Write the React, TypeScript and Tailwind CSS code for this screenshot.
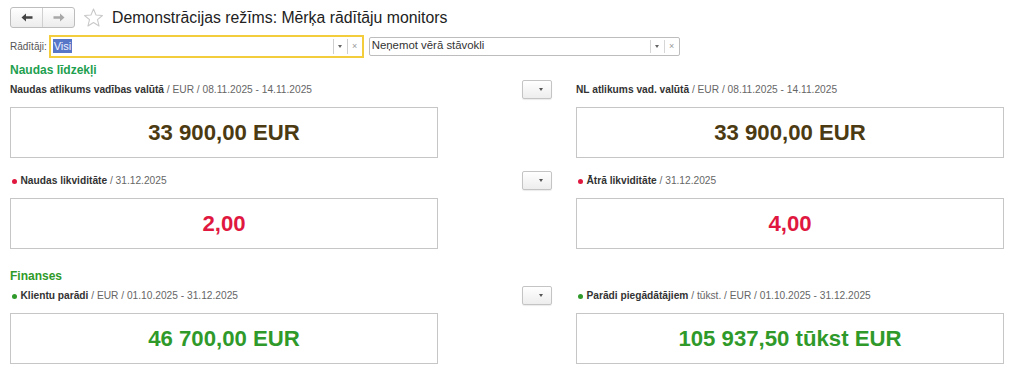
import React from "react";

type Tone = "brown" | "red" | "green";

const valueColor: Record<Tone, string> = {
  brown: "text-[#4b3a12]",
  red: "text-[#e0183f]",
  green: "text-[#2f9a2a]",
};

function DropButton() {
  return (
    <button
      type="button"
      className="flex h-[19px] w-[30px] items-center justify-end rounded-[2px] border border-[#c4c4c4] bg-gradient-to-b from-white to-[#ededed] pr-[8px] shadow-[0_1px_1px_rgba(0,0,0,0.08)]"
    >
      <span className="h-0 w-0 border-x-[2.5px] border-t-[3px] border-x-transparent border-t-[#555]" />
    </button>
  );
}

function Indicator({
  title,
  meta,
  value,
  tone,
  dot,
}: {
  title: string;
  meta: string;
  value: string;
  tone: Tone;
  dot?: "red" | "green";
}) {
  return (
    <div className="flex flex-col">
      <div className="flex h-[19px] items-center pt-[2px] text-[10.2px] leading-none">
        {dot ? (
          <span
            className={
              dot === "red"
                ? "mr-[4px] ml-[2px] h-[4.5px] w-[4.5px] rounded-full bg-[#e0183f]"
                : "mr-[4px] ml-[2px] h-[4.5px] w-[4.5px] rounded-full bg-[#2f9a2a]"
            }
          />
        ) : null}
        <span className="font-bold text-[#333]">{title}</span>
        <span className="whitespace-pre text-[#666]">{meta}</span>
      </div>
      <div className="mt-[8px] flex h-[51px] w-[428px] items-center justify-center border border-[#c6c6c6] bg-white">
        <span className={`text-[22.2px] font-bold ${valueColor[tone]}`}>{value}</span>
      </div>
    </div>
  );
}

function Row({
  left,
  right,
}: {
  left: React.ReactNode;
  right: React.ReactNode;
}) {
  return (
    <div className="flex">
      <div className="relative w-[542px]">
        {left}
        <div className="absolute right-0 top-0">
          <DropButton />
        </div>
      </div>
      <div className="ml-[24px]">{right}</div>
    </div>
  );
}

export default function App() {
  return (
    <div className="h-[379px] w-[1024px] overflow-hidden bg-white px-[10px] font-['Liberation_Sans',Arial,sans-serif] text-[#333]">
      <div className="flex h-[34px] items-center pt-[1px]">
        <div className="flex h-[21px] overflow-hidden rounded-[3px] border border-[#bdbdbd] bg-gradient-to-b from-white to-[#ececec]">
          <div className="flex w-[32px] items-center justify-center border-r border-[#d0d0d0]">
            <svg width="12" height="9" viewBox="0 0 12 9">
              <path d="M0.5 4.5 L5 0.5 L5 3.3 L11.5 3.3 L11.5 5.7 L5 5.7 L5 8.5 Z" fill="#444" />
            </svg>
          </div>
          <div className="flex w-[31px] items-center justify-center">
            <svg width="12" height="9" viewBox="0 0 12 9">
              <path d="M11.5 4.5 L7 0.5 L7 3.3 L0.5 3.3 L0.5 5.7 L7 5.7 L7 8.5 Z" fill="#a8a8a8" />
            </svg>
          </div>
        </div>
        <svg className="ml-[8px]" width="21" height="20" viewBox="0 0 24 23">
          <path
            d="M12 1.2 L14.9 8.1 L22.3 8.6 L16.6 13.4 L18.4 20.7 L12 16.7 L5.6 20.7 L7.4 13.4 L1.7 8.6 L9.1 8.1 Z"
            fill="none"
            stroke="#c8c8c8"
            strokeWidth="1.2"
            strokeLinejoin="round"
          />
        </svg>
        <h1 className="ml-[8px] text-[15.8px] leading-none text-[#222]">
          Demonstrācijas režīms: Mērķa rādītāju monitors
        </h1>
      </div>

      <div className="flex h-[24px] items-center">
        <span className="mr-[2px] text-[10px] text-[#555]">Rādītāji:</span>
        <div className="flex h-[23px] w-[315px] items-center border-2 border-[#f3cd3c] bg-white">
          <span className="ml-[2px] bg-[#5876c8] px-[1px] text-[11px] leading-[14px] text-[#eef0ff]">Visi</span>
          <div className="flex-1" />
          <div className="flex h-[15px] w-[14px] items-center justify-center border-l border-[#cfcfcf]">
            <span className="h-0 w-0 border-x-[2.5px] border-t-[3px] border-x-transparent border-t-[#666]" />
          </div>
          <div className="flex h-[15px] w-[15px] items-center justify-center border-l border-[#cfcfcf] text-[9px] leading-none text-[#999]">
            ×
          </div>
        </div>
        <div className="ml-[5px] flex h-[19px] w-[311px] items-center rounded-[2px] border border-[#bdbdbd] bg-white">
          <span className="ml-[2px] text-[11.4px] text-[#333]">Neņemot vērā stāvokli</span>
          <div className="flex-1" />
          <div className="flex h-[13px] w-[14px] items-center justify-center border-l border-[#d6d6d6]">
            <span className="h-0 w-0 border-x-[2.5px] border-t-[3px] border-x-transparent border-t-[#666]" />
          </div>
          <div className="flex h-[13px] w-[15px] items-center justify-center border-l border-[#d6d6d6] text-[9px] leading-none text-[#999]">
            ×
          </div>
        </div>
      </div>

      <h2 className="mt-[3px] flex h-[17px] items-center text-[12px] font-bold text-[#1ea04f]">Naudas līdzekļi</h2>
      <div className="mt-[2px]">
        <Row
          left={
            <Indicator
              title="Naudas atlikums vadības valūtā"
              meta=" / EUR / 08.11.2025 - 14.11.2025"
              value="33 900,00 EUR"
              tone="brown"
            />
          }
          right={
            <Indicator
              title="NL atlikums vad. valūtā"
              meta=" / EUR / 08.11.2025 - 14.11.2025"
              value="33 900,00 EUR"
              tone="brown"
            />
          }
        />
      </div>
      <div className="mt-[13px]">
        <Row
          left={
            <Indicator title="Naudas likviditāte" meta=" / 31.12.2025" value="2,00" tone="red" dot="red" />
          }
          right={
            <Indicator title="Ātrā likviditāte" meta=" / 31.12.2025" value="4,00" tone="red" dot="red" />
          }
        />
      </div>

      <h2 className="mt-[18px] flex h-[17px] items-center text-[12px] font-bold text-[#2f9a2a]">Finanses</h2>
      <div className="mt-[2px]">
        <Row
          left={
            <Indicator
              title="Klientu parādi"
              meta=" / EUR / 01.10.2025 - 31.12.2025"
              value="46 700,00 EUR"
              tone="green"
              dot="green"
            />
          }
          right={
            <Indicator
              title="Parādi piegādātājiem"
              meta=" / tūkst. / EUR / 01.10.2025 - 31.12.2025"
              value="105 937,50 tūkst EUR"
              tone="green"
              dot="green"
            />
          }
        />
      </div>
    </div>
  );
}
